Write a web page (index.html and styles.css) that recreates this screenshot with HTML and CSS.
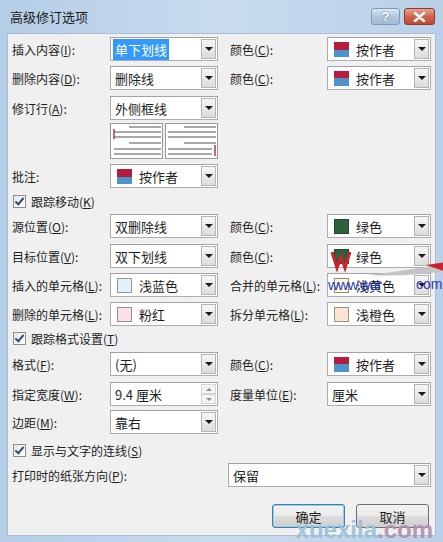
FILE: index.html
```html
<!DOCTYPE html>
<html lang="zh-CN">

<head>
    <meta charset="UTF-8">
    <meta name="viewport" content="width=device-width, initial-scale=1.0">
    <title>高级修订选项</title>
    <link rel="stylesheet" href="styles.css">
</head>

<body>
    <div class="window">
        <div class="titlebar">
            <span class="title">高级修订选项</span>
            <div class="caption-btns">
                <div class="cap-btn help">?</div>
                <div class="cap-btn close">
                    <svg width="13" height="10" viewBox="0 0 13 10">
                        <path d="M2 1 L11 9 M11 1 L2 9" stroke="#fff" stroke-width="2.6" stroke-linecap="round" />
                    </svg>
                </div>
            </div>
        </div>

        <div class="client">
            <div class="row r1">
                <span class="label">插入内容(<u>I</u>):</span>
                <div class="combo left-combo">
                    <span class="combo-text"><span class="selected">单下划线</span></span>
                    <span class="drop"></span>
                </div>
                <span class="label right-label">颜色(<u>C</u>):</span>
                <div class="combo right-combo">
                    <span class="swatch author"></span>
                    <span class="combo-text">按作者</span>
                    <span class="drop"></span>
                </div>
            </div>

            <div class="row r2">
                <span class="label">删除内容(<u>D</u>):</span>
                <div class="combo left-combo">
                    <span class="combo-text">删除线</span>
                    <span class="drop"></span>
                </div>
                <span class="label right-label">颜色(<u>C</u>):</span>
                <div class="combo right-combo">
                    <span class="swatch author"></span>
                    <span class="combo-text">按作者</span>
                    <span class="drop"></span>
                </div>
            </div>

            <div class="row r3">
                <span class="label">修订行(<u>A</u>):</span>
                <div class="combo left-combo">
                    <span class="combo-text">外侧框线</span>
                    <span class="drop"></span>
                </div>
            </div>

            <div class="preview-row">
                <div class="preview">
                    <div class="panel">
                        <svg width="52" height="34" viewBox="0 0 52 34">
                            <rect x="0" y="0" width="52" height="34" fill="#fff" />
                            <g stroke="#a8a8a8" stroke-width="2">
                                <line x1="18" y1="3" x2="50" y2="3" />
                                <line x1="3" y1="8" x2="50" y2="8" />
                                <line x1="3" y1="13" x2="50" y2="13" />
                                <line x1="18" y1="19" x2="50" y2="19" />
                                <line x1="3" y1="25" x2="50" y2="25" />
                                <line x1="3" y1="30" x2="50" y2="30" />
                            </g>
                            <line x1="3" y1="5" x2="3" y2="15" stroke="#b0283a" stroke-width="1.4" />
                        </svg>
                    </div>
                    <div class="panel">
                        <svg width="52" height="34" viewBox="0 0 52 34">
                            <rect x="0" y="0" width="52" height="34" fill="#fff" />
                            <g stroke="#a8a8a8" stroke-width="2">
                                <line x1="18" y1="3" x2="50" y2="3" />
                                <line x1="2" y1="8" x2="50" y2="8" />
                                <line x1="2" y1="13" x2="50" y2="13" />
                                <line x1="18" y1="19" x2="50" y2="19" />
                                <line x1="2" y1="25" x2="46" y2="25" />
                                <line x1="2" y1="30" x2="46" y2="30" />
                            </g>
                            <line x1="49" y1="21" x2="49" y2="32" stroke="#b0283a" stroke-width="1.4" />
                        </svg>
                    </div>
                </div>
            </div>

            <div class="row r4">
                <span class="label">批注:</span>
                <div class="combo left-combo">
                    <span class="swatch author"></span>
                    <span class="combo-text">按作者</span>
                    <span class="drop"></span>
                </div>
            </div>

            <div class="check-row c1">
                <span class="checkbox"></span>
                <span>跟踪移动(<u>K</u>)</span>
            </div>

            <div class="row r5">
                <span class="label">源位置(<u>O</u>):</span>
                <div class="combo left-combo">
                    <span class="combo-text">双删除线</span>
                    <span class="drop"></span>
                </div>
                <span class="label right-label">颜色(<u>C</u>):</span>
                <div class="combo right-combo">
                    <span class="swatch green"></span>
                    <span class="combo-text">绿色</span>
                    <span class="drop"></span>
                </div>
            </div>

            <div class="row r6">
                <span class="label">目标位置(<u>V</u>):</span>
                <div class="combo left-combo">
                    <span class="combo-text">双下划线</span>
                    <span class="drop"></span>
                </div>
                <span class="label right-label">颜色(<u>C</u>):</span>
                <div class="combo right-combo">
                    <span class="swatch green"></span>
                    <span class="combo-text">绿色</span>
                    <span class="drop"></span>
                </div>
            </div>

            <div class="row r7">
                <span class="label">插入的单元格(<u>L</u>):</span>
                <div class="combo left-combo">
                    <span class="swatch light-blue"></span>
                    <span class="combo-text">浅蓝色</span>
                    <span class="drop"></span>
                </div>
                <span class="label right-label">合并的单元格(<u>L</u>):</span>
                <div class="combo right-combo">
                    <span class="swatch light-yellow"></span>
                    <span class="combo-text">浅黄色</span>
                    <span class="drop"></span>
                </div>
            </div>

            <div class="row r8">
                <span class="label">删除的单元格(<u>L</u>):</span>
                <div class="combo left-combo">
                    <span class="swatch pink"></span>
                    <span class="combo-text">粉红</span>
                    <span class="drop"></span>
                </div>
                <span class="label right-label">拆分单元格(<u>L</u>):</span>
                <div class="combo right-combo">
                    <span class="swatch light-orange"></span>
                    <span class="combo-text">浅橙色</span>
                    <span class="drop"></span>
                </div>
            </div>

            <div class="check-row c2">
                <span class="checkbox"></span>
                <span>跟踪格式设置(<u>T</u>)</span>
            </div>

            <div class="row r9">
                <span class="label">格式(<u>F</u>):</span>
                <div class="combo left-combo">
                    <span class="combo-text">(无)</span>
                    <span class="drop"></span>
                </div>
                <span class="label right-label">颜色(<u>C</u>):</span>
                <div class="combo right-combo">
                    <span class="swatch author"></span>
                    <span class="combo-text">按作者</span>
                    <span class="drop"></span>
                </div>
            </div>

            <div class="row r10">
                <span class="label">指定宽度(<u>W</u>):</span>
                <div class="combo left-combo">
                    <span class="combo-text">9.4 厘米</span>
                    <span class="spin">
                        <span class="spin-up"></span>
                        <span class="spin-down"></span>
                    </span>
                </div>
                <span class="label right-label">度量单位(<u>E</u>):</span>
                <div class="combo right-combo">
                    <span class="combo-text">厘米</span>
                    <span class="drop"></span>
                </div>
            </div>

            <div class="row r11">
                <span class="label">边距(<u>M</u>):</span>
                <div class="combo left-combo">
                    <span class="combo-text">靠右</span>
                    <span class="drop"></span>
                </div>
            </div>

            <div class="check-row c3">
                <span class="checkbox"></span>
                <span>显示与文字的连线(<u>S</u>)</span>
            </div>

            <div class="row r12">
                <span class="label wide-label">打印时的纸张方向(<u>P</u>):</span>
                <div class="combo print-combo">
                    <span class="combo-text">保留</span>
                    <span class="drop"></span>
                </div>
            </div>

            <div class="btn-row">
                <div class="btn default">确定</div>
                <div class="btn">取消</div>
            </div>

            <div class="mark-mid">
                <svg width="120" height="36" viewBox="0 0 120 36">
                    <path d="M4 8 L9 24 L13 13 L17 24 L22 8" stroke="#d0202a" stroke-width="3" fill="none" />
                    <path d="M40 31 Q80 27 118 19 L116 27 Q80 33 40 31 Z" fill="#c4c4c4" />
                    <path d="M98 21 L118 18 L116 27 Z" fill="#d0202a" />
                </svg>
                <span class="mark-www">www.wer</span>
                <span class="mark-com">com</span>
            </div>
            <div class="mark-bottom">xuexila<span class="dot-com">.com</span></div>
        </div>
    </div>
</body>

</html>
```

FILE: styles.css
```css
body,
html {
    padding: 0;
    margin: 0;
    width: 443px;
    height: 542px;
    overflow: hidden;
    font-family: "Noto Sans CJK SC", "Noto Sans", sans-serif;
    font-size: 12px;
    color: #1e1e1e;
}

.window {
    width: 443px;
    height: 542px;
    box-sizing: border-box;
    padding: 0 7px 6px 7px;
    background: linear-gradient(90deg, #b4cde6, #c9dcef 50%, #b9d0e8);
    display: flex;
    flex-direction: column;
}

.titlebar {
    height: 33px;
    display: flex;
    align-items: flex-start;
    justify-content: space-between;
}

.title {
    font-size: 13px;
    color: #1a1a1a;
    padding: 7px 0 0 3px;
}

.caption-btns {
    display: flex;
    padding-top: 8px;
    gap: 4px;
}

.cap-btn {
    height: 17px;
    border-radius: 3px;
    display: flex;
    align-items: center;
    justify-content: center;
    box-sizing: border-box;
}

.cap-btn.help {
    width: 29px;
    border: 1px solid #7f9ab8;
    background: linear-gradient(#dbe7f4, #b2c8df 50%, #a2bbd6);
    color: #ffffff;
    font-family: "Liberation Sans", sans-serif;
    font-weight: bold;
    font-size: 13px;
    text-shadow: 0 0 2px #4a6a8c;
}

.cap-btn.close {
    width: 31px;
    margin-right: 1px;
    border: 1px solid #8d3a2c;
    background: linear-gradient(#e8a493, #d1654c 50%, #c24730);
}

.client {
    flex: 1;
    position: relative;
    background: #f0f0f0;
    border: 1px solid #a9bfd6;
    padding: 2px 0 0 4px;
}

.row {
    display: flex;
    align-items: center;
    height: 24px;
}

.label {
    width: 98px;
    white-space: nowrap;
}

.right-label {
    width: 97px;
    margin-left: 12px;
}

.wide-label {
    width: 216px;
}

.combo {
    height: 24px;
    box-sizing: border-box;
    display: flex;
    align-items: center;
    border: 1px solid #abadb3;
    border-top-color: #a0a3aa;
    background: #fff;
    font-size: 13px;
}

.left-combo {
    width: 108px;
}

.right-combo {
    width: 104px;
}

.print-combo {
    width: 203px;
}

.combo-text {
    flex: 1;
    padding-left: 4px;
    white-space: nowrap;
}

.selected {
    background: #3399ff;
    color: #fff;
    padding: 1px 2px;
    margin-left: -2px;
}

.drop {
    width: 15px;
    height: 20px;
    margin-right: 1px;
    box-sizing: border-box;
    border: 1px solid #b4b4b4;
    background: linear-gradient(#f6f6f6, #dcdcdc);
    display: flex;
    align-items: center;
    justify-content: center;
}

.drop::after {
    content: "";
    border-left: 4px solid transparent;
    border-right: 4px solid transparent;
    border-top: 4px solid #1a1a1a;
}

.spin {
    width: 15px;
    height: 20px;
    margin-right: 1px;
    display: flex;
    flex-direction: column;
}

.spin-up,
.spin-down {
    flex: 1;
    display: flex;
    align-items: center;
    justify-content: center;
    border: 1px solid #d4d4d4;
    background: #f4f4f4;
}

.spin-up::after {
    content: "";
    border-left: 3px solid transparent;
    border-right: 3px solid transparent;
    border-bottom: 3px solid #8a8a8a;
}

.spin-down::after {
    content: "";
    border-left: 3px solid transparent;
    border-right: 3px solid transparent;
    border-top: 3px solid #8a8a8a;
}

.swatch {
    width: 15px;
    height: 15px;
    margin-left: 6px;
    margin-right: 3px;
    box-sizing: border-box;
    flex-shrink: 0;
}

.swatch.author {
    background: linear-gradient(#b71c3e 50%, #4d93cc 50%);
}

.swatch.green {
    background: #2f5f3c;
    border: 1px solid #244a2e;
}

.swatch.light-blue {
    background: #e4f0fa;
    border: 1px solid #8a9aa8;
}

.swatch.light-yellow {
    background: #fdf8dc;
    border: 1px solid #8a8a80;
}

.swatch.pink {
    background: #fbe0ea;
    border: 1px solid #a08a92;
}

.swatch.light-orange {
    background: #fde4d2;
    border: 1px solid #a0907f;
}

.r1 {
    margin-top: 1px;
}

.r2 {
    margin-top: 5px;
}

.r3 {
    margin-top: 6px;
}

.preview-row {
    margin-top: 3px;
    padding-left: 98px;
    height: 36px;
}

.preview {
    width: 108px;
    height: 36px;
    display: flex;
    gap: 2px;
}

.panel {
    flex: 1;
    border: 1px solid #9a9a9a;
    line-height: 0;
    overflow: hidden;
}

.r4 {
    margin-top: 5px;
}

.check-row {
    display: flex;
    align-items: center;
    height: 16px;
    padding-left: 1px;
    gap: 5px;
}

.checkbox {
    width: 13px;
    height: 13px;
    box-sizing: border-box;
    border: 1px solid #8e8f8f;
    background: linear-gradient(135deg, #e6e6e6, #fff);
    position: relative;
}

.checkbox::after {
    content: "";
    position: absolute;
    left: 3px;
    top: 0px;
    width: 3px;
    height: 7px;
    border-right: 2px solid #2d4a7a;
    border-bottom: 2px solid #2d4a7a;
    transform: rotate(40deg);
}

.c1 {
    margin-top: 5px;
}

.r5 {
    margin-top: 5px;
}

.r6 {
    margin-top: 6px;
}

.r7 {
    margin-top: 5px;
}

.r8 {
    margin-top: 5px;
}

.c2 {
    margin-top: 4px;
}

.r9 {
    margin-top: 6px;
}

.r10 {
    margin-top: 6px;
}

.r11 {
    margin-top: 4px;
}

.c3 {
    margin-top: 8px;
}

.r12 {
    margin-top: 5px;
}

.btn-row {
    display: flex;
    justify-content: flex-end;
    gap: 11px;
    margin-top: 17px;
    padding-right: 6px;
}

.btn {
    width: 73px;
    height: 24px;
    box-sizing: border-box;
    border: 1px solid #707070;
    border-radius: 3px;
    background: linear-gradient(#f2f2f2, #ebebeb 50%, #dddddd 51%, #cfcfcf);
    display: flex;
    align-items: center;
    justify-content: center;
    font-size: 13px;
}

.btn.default {
    border-color: #3c7fb1;
    box-shadow: inset 0 0 0 1px #8fd0f0;
}

.mark-mid {
    position: absolute;
    left: 290px;
    top: 210px;
    width: 140px;
    height: 50px;
}

.mark-mid svg {
    position: absolute;
    left: 30px;
    top: 0;
}

.mark-www {
    position: absolute;
    left: 30px;
    top: 32px;
    color: #2a3ab8;
    font-family: "Liberation Sans", sans-serif;
    font-size: 15px;
    letter-spacing: -1px;
}

.mark-com {
    position: absolute;
    left: 118px;
    top: 32px;
    color: #2a3ab8;
    font-family: "Liberation Sans", sans-serif;
    font-size: 14px;
}

.mark-bottom {
    position: absolute;
    right: 2px;
    bottom: -9px;
    font-family: "Liberation Sans", sans-serif;
    font-weight: bold;
    font-size: 24px;
    color: #9cc0d6;
    opacity: 0.9;
}

.dot-com {
    color: #b08fb0;
}
```
